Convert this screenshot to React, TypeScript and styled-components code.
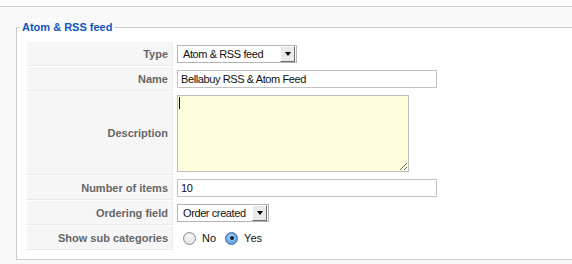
import styled, { createGlobalStyle } from "styled-components";

const GlobalStyle = createGlobalStyle`
  html, body {
    margin: 0;
    padding: 0;
    background: #fff;
    overflow: hidden;
  }
  body {
    font-family: "Liberation Sans", Arial, sans-serif;
  }
`;

const Page = styled.div`
  height: 264px;
  padding-top: 6px;
  box-sizing: border-box;
  overflow: hidden;
`;

const Panel = styled.div`
  height: 258px;
  box-sizing: border-box;
  border-top: 1px solid #cccccc;
  background: #f9f9f9;
  padding: 14px 0 0 16px;
`;

const Fieldset = styled.fieldset`
  margin: 0 -60px 0 0;
  padding: 0 0 8px 0;
  border-width: 1px 0 1px 1px;
  border-style: solid;
  border-color: #cccccc;
  background: #fff;
  box-sizing: border-box;
`;

const Legend = styled.legend`
  margin-left: 3px;
  padding: 0 2px;
  color: #0b55c4;
  font-size: 11px;
  font-weight: bold;
  line-height: 13px;
`;

const FormTable = styled.table`
  margin: 7px 0 0 9px;
  border-collapse: separate;
  border-spacing: 1px;
`;

const KeyCell = styled.td`
  width: 141px;
  padding: 3px 4px 3px 0;
  background: #f6f6f6;
  border-bottom: 1px solid #e9e9e9;
  border-right: 1px solid #e9e9e9;
  color: #666;
  font-size: 11px;
  font-weight: bold;
  line-height: 14px;
  text-align: right;
  vertical-align: middle;
  white-space: nowrap;
`;

const ValueCell = styled.td`
  padding: 3px 4px 3px 3px;
  vertical-align: middle;
`;

const fieldFont = `
  font-family: "Liberation Sans", Arial, sans-serif;
  font-size: 11px;
  letter-spacing: -0.4px;
  color: #111;
`;

const TextInput = styled.input<{ $width: number }>`
  ${fieldFont}
  display: block;
  width: ${({ $width }) => $width}px;
  height: 18px;
  box-sizing: border-box;
  margin: 0;
  padding: 0 3px;
  border: 1px solid #c2c2c2;
  background: #fff;
  outline: none;
`;

const SelectBox = styled.div<{ $width: number }>`
  ${fieldFont}
  display: flex;
  align-items: center;
  width: ${({ $width }) => $width}px;
  height: 18px;
  box-sizing: border-box;
  border: 1px solid #b4b4b4;
  background: #fff;
`;

const SelectText = styled.span`
  flex: 1;
  padding-left: 5px;
  line-height: 16px;
  white-space: nowrap;
`;

const SelectArrow = styled.span`
  display: flex;
  align-items: center;
  justify-content: center;
  width: 15px;
  height: 16px;
  box-sizing: border-box;
  margin-right: 1px;
  background: #e9e9e9;
  border-top: 1px solid #fff;
  border-left: 1px solid #fff;
  border-right: 1px solid #6f6f6f;
  border-bottom: 1px solid #6f6f6f;

  &::after {
    content: "";
    width: 0;
    height: 0;
    border-left: 3.5px solid transparent;
    border-right: 3.5px solid transparent;
    border-top: 4px solid #000;
  }
`;

const AreaWrap = styled.div`
  position: relative;
  width: 232px;
  height: 77px;
`;

const TextArea = styled.textarea`
  ${fieldFont}
  display: block;
  width: 232px;
  height: 77px;
  box-sizing: border-box;
  margin: 0;
  padding: 2px;
  border: 1px solid #bdbdbd;
  background: #ffffdd;
  resize: both;
  outline: none;
`;

const Caret = styled.span`
  position: absolute;
  left: 2px;
  top: 2px;
  width: 1px;
  height: 12px;
  background: #000;
`;

const RadioGroup = styled.div`
  display: flex;
  align-items: center;
  height: 18px;
  padding-left: 6px;
  font-size: 11px;
  color: #111;
`;

const Radio = styled.span<{ $checked?: boolean }>`
  position: relative;
  width: 13px;
  height: 13px;
  box-sizing: border-box;
  border-radius: 50%;
  border: 1px solid ${({ $checked }) => ($checked ? "#3d6fa8" : "#8c8c8c")};
  background: ${({ $checked }) =>
    $checked
      ? "radial-gradient(circle at 50% 40%, #c9e3fb 0%, #6eaee9 55%, #3a84d2 100%)"
      : "linear-gradient(#ffffff, #e2e2e2)"};
  box-shadow: inset 0 1px 1px rgba(0, 0, 0, 0.12);

  &::after {
    content: "";
    display: ${({ $checked }) => ($checked ? "block" : "none")};
    position: absolute;
    left: 3.5px;
    top: 3.5px;
    width: 4px;
    height: 4px;
    border-radius: 50%;
    background: #0d1f36;
  }
`;

const RadioLabel = styled.span`
  margin: 0 9px 0 6px;
  line-height: 14px;
`;

export default function App() {
  return (
    <>
      <GlobalStyle />
      <Page>
        <Panel>
          <Fieldset>
            <Legend>Atom &amp; RSS feed</Legend>
            <FormTable>
              <tbody>
                <tr>
                  <KeyCell>Type</KeyCell>
                  <ValueCell>
                    <SelectBox $width={120}>
                      <SelectText>Atom &amp; RSS feed</SelectText>
                      <SelectArrow />
                    </SelectBox>
                  </ValueCell>
                </tr>
                <tr>
                  <KeyCell>Name</KeyCell>
                  <ValueCell>
                    <TextInput
                      $width={260}
                      defaultValue="Bellabuy RSS & Atom Feed"
                    />
                  </ValueCell>
                </tr>
                <tr>
                  <KeyCell>Description</KeyCell>
                  <ValueCell>
                    <AreaWrap>
                      <TextArea defaultValue="" />
                      <Caret />
                    </AreaWrap>
                  </ValueCell>
                </tr>
                <tr>
                  <KeyCell>Number of items</KeyCell>
                  <ValueCell>
                    <TextInput $width={260} defaultValue="10" />
                  </ValueCell>
                </tr>
                <tr>
                  <KeyCell>Ordering field</KeyCell>
                  <ValueCell>
                    <SelectBox $width={92}>
                      <SelectText>Order created</SelectText>
                      <SelectArrow />
                    </SelectBox>
                  </ValueCell>
                </tr>
                <tr>
                  <KeyCell>Show sub categories</KeyCell>
                  <ValueCell>
                    <RadioGroup>
                      <Radio />
                      <RadioLabel>No</RadioLabel>
                      <Radio $checked />
                      <RadioLabel>Yes</RadioLabel>
                    </RadioGroup>
                  </ValueCell>
                </tr>
              </tbody>
            </FormTable>
          </Fieldset>
        </Panel>
      </Page>
    </>
  );
}
